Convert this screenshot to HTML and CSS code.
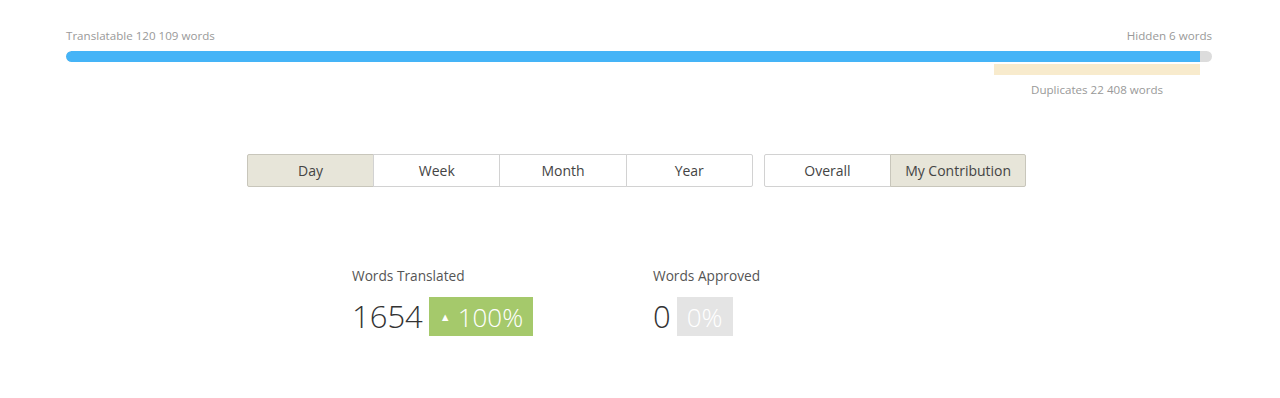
FILE: index.html
```html
<!DOCTYPE html>
<html lang="en">
<head>
    <meta charset="UTF-8">
    <title>Statistics</title>
    <link rel="stylesheet" href="styles.css">
</head>
<body>
    <div class="page">
        <div class="progress">
            <div class="progress-labels">
                <span>Translatable 120 109 words</span>
                <span>Hidden 6 words</span>
            </div>
            <div class="bar">
                <div class="bar-fill"></div>
            </div>
            <div class="dup-wrap">
                <div class="dup-bar"></div>
                <div class="dup-label">Duplicates 22 408 words</div>
            </div>
        </div>

        <div class="filters">
            <div class="btn-group">
                <button class="btn active">Day</button>
                <button class="btn">Week</button>
                <button class="btn">Month</button>
                <button class="btn">Year</button>
            </div>
            <div class="btn-group">
                <button class="btn">Overall</button>
                <button class="btn active wide">My Contribution</button>
            </div>
        </div>

        <div class="stats">
            <div class="stat">
                <div class="stat-title">Words Translated</div>
                <div class="stat-value">
                    <span class="number">1654</span>
                    <span class="badge up"><span class="arrow">&#9650;</span>100%</span>
                </div>
            </div>
            <div class="stat">
                <div class="stat-title">Words Approved</div>
                <div class="stat-value">
                    <span class="number">0</span>
                    <span class="badge none">0%</span>
                </div>
            </div>
        </div>
    </div>
</body>
</html>
```

FILE: styles.css
```css
body {
    margin: 0;
    padding: 0;
    font-family: "Open Sans", Arial, sans-serif;
    background-color: #fff;
    color: #333;
}

.page {
    padding: 29px 68px 0 66px;
}

/* Barra de progreso */
.progress-labels {
    display: flex;
    justify-content: space-between;
    font-size: 11.6px;
    line-height: 14px;
    color: #999;
}

.bar {
    margin-top: 8px;
    height: 11px;
    border-radius: 6px;
    background-color: #dcdcdc;
    overflow: hidden;
}

.bar-fill {
    width: 98.95%;
    height: 100%;
    background-color: #45b4f7;
    border-radius: 6px 0 0 6px;
}

.dup-wrap {
    margin-left: 80.98%;
    width: 17.98%;
}

.dup-bar {
    margin-top: 2px;
    height: 11px;
    background-color: #f8ebcd;
}

.dup-label {
    margin-top: 8px;
    text-align: center;
    white-space: nowrap;
    font-size: 11.6px;
    line-height: 14px;
    color: #999;
}

/* Filtros */
.filters {
    display: flex;
    justify-content: center;
    gap: 11px;
    margin-top: 57px;
    padding-right: 5px;
}

.btn-group {
    display: flex;
}

.btn {
    width: 127.25px;
    height: 33px;
    margin-left: -1px;
    padding: 0;
    font-family: "Open Sans", Arial, sans-serif;
    font-size: 14px;
    color: #444;
    background-color: #fff;
    border: 1px solid #d2d2d2;
    cursor: pointer;
}

.btn:first-child {
    margin-left: 0;
    border-radius: 2px 0 0 2px;
}

.btn:last-child {
    border-radius: 0 2px 2px 0;
}

.btn.active {
    background-color: #e7e5d9;
    border-color: #c8c6bb;
}

.btn.wide {
    width: 136px;
}

/* Estadisticas */
.stats {
    display: flex;
    margin-top: 80px;
    padding-left: 286px;
}

.stat {
    width: 301px;
}

.stat-title {
    font-size: 13.7px;
    line-height: 18px;
    color: #555;
}

.stat-value {
    display: flex;
    align-items: center;
    gap: 6px;
    margin-top: 12px;
}

.number {
    font-size: 31px;
    font-weight: 300;
    line-height: 39px;
    color: #333;
}

.badge {
    display: inline-flex;
    align-items: center;
    height: 39px;
    padding: 0 10px;
    font-size: 26px;
    font-weight: 300;
    color: #fff;
}

.badge.up {
    background-color: #a5c96b;
}

.badge.none {
    background-color: #e4e4e4;
}

.arrow {
    font-size: 11px;
    margin: 0 7px 0 1px;
}
```
